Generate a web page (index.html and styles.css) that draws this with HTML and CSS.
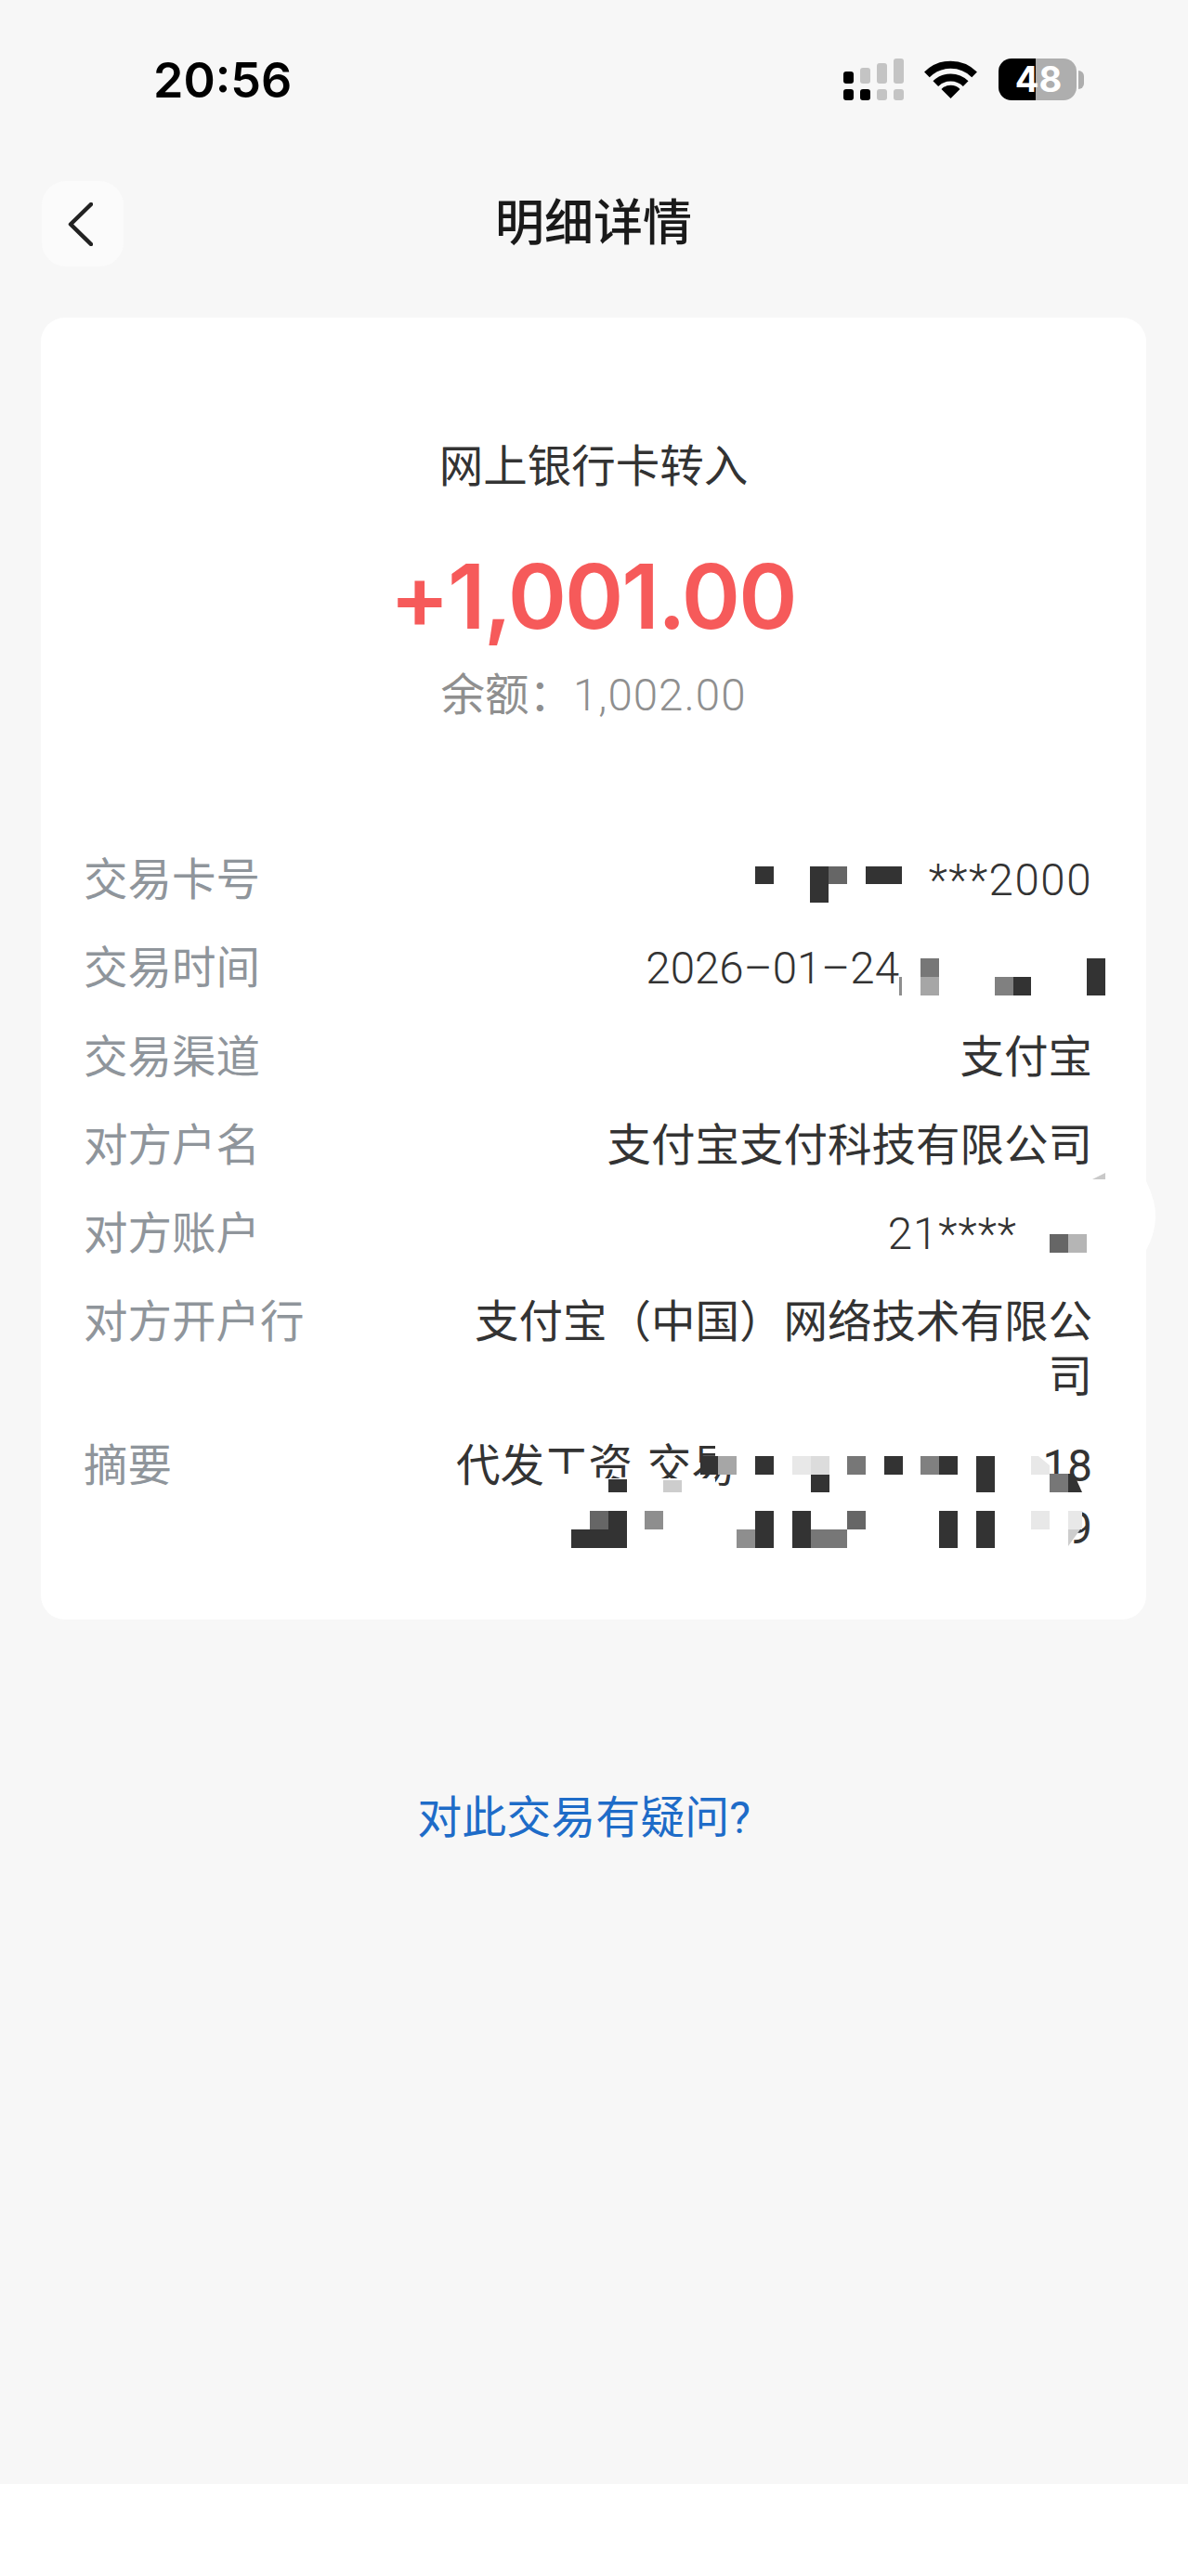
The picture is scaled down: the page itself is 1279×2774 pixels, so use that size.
FILE: index.html
```html
<!DOCTYPE html>
<html lang="zh-CN">
<head>
<meta charset="utf-8">
<title>明细详情</title>
<link rel="stylesheet" href="styles.css">
</head>
<body>
<div class="page">
  <main class="screen">
    <header class="status">
      <div class="time">20:56</div>
      <div class="status-icons">
        <svg class="signal" viewBox="0 0 65 45" aria-hidden="true">
          <rect class="on" x="0" y="14" width="11" height="13" rx="3"/>
          <rect class="off" x="18" y="10" width="11" height="17" rx="3"/>
          <rect class="off" x="36" y="5" width="11" height="22" rx="3"/>
          <rect class="off" x="54" y="0" width="11" height="27" rx="3"/>
          <rect class="on" x="0" y="33" width="11" height="12" rx="3"/>
          <rect class="on" x="18" y="33" width="11" height="12" rx="3"/>
          <rect class="off" x="36" y="33" width="11" height="12" rx="3"/>
          <rect class="off" x="54" y="33" width="11" height="12" rx="3"/>
        </svg>
        <svg class="wifi" viewBox="0 0 57 41" aria-hidden="true">
          <path class="wifi-arc" d="M2.9 15.4A36 36 0 0 1 54.1 15.4"/>
          <path class="wifi-arc" d="M12.3 25.2A23 23 0 0 1 44.7 25.2"/>
          <path class="wifi-dot" d="M28.5 41L18.5 31A14 14 0 0 1 38.5 31Z"/>
        </svg>
        <div class="battery"><span class="battery-level">48</span><span class="battery-nub"></span></div>
      </div>
    </header>

    <nav class="nav">
      <button class="back" type="button" aria-label="返回">
        <svg class="back-icon" viewBox="0 0 27 47" aria-hidden="true"><path d="M25 2L3 23.5L25 45"/></svg>
      </button>
      <h1 class="title">明细详情</h1>
    </nav>

    <section class="card">
      <div class="hero">
        <div class="hero-type">网上银行卡转入</div>
        <div class="hero-amount">+1,001.00</div>
        <div class="hero-balance">余额：<span class="num">1,002.00</span></div>
      </div>
      <dl class="rows">
        <div class="row"><dt class="label">交易卡号</dt><dd class="value num spaced">***2000</dd></div>
        <div class="row"><dt class="label">交易时间</dt><dd class="value num value-date">2026–01–24</dd></div>
        <div class="row"><dt class="label">交易渠道</dt><dd class="value">支付宝</dd></div>
        <div class="row"><dt class="label">对方户名</dt><dd class="value">支付宝支付科技有限公司</dd></div>
        <div class="row"><dt class="label">对方账户</dt><dd class="value num value-account">21****</dd></div>
        <div class="row"><dt class="label">对方开户行</dt><dd class="value">支付宝（中国）网络技术有限公司</dd></div>
        <div class="row"><dt class="label">摘要</dt>
          <dd class="value value-memo">
            <span class="memo-line"><span class="memo-text">代发工资 交易</span><span>18</span></span>
            <span class="memo-end">9</span>
          </dd>
        </div>
      </dl>
    </section>

    <a class="question" href="#">对此交易有疑问?</a>
  </main>

  <svg class="redaction" viewBox="0 0 1279 2774" shape-rendering="crispEdges" aria-hidden="true">
    <g class="mask">
      <path shape-rendering="auto" d="M1234 1272Q1245 1295 1244 1312Q1243 1330 1234 1346Z"/>
      <rect x="584" y="1587" width="56" height="24"/>
      <rect x="640" y="1592" width="130" height="19"/>
      <rect x="770" y="1550" width="30" height="20"/>
    </g>
    <path class="corner" shape-rendering="auto" d="M1176 1270L1190 1263V1270Z"/>
    <g class="d">
      <rect x="813" y="933" width="20" height="19"/><rect x="872" y="933" width="20" height="39"/><rect x="932" y="933" width="39" height="19"/>
      <rect x="1091" y="1052" width="19" height="20"/><rect x="1170" y="1032" width="20" height="40"/>
      <rect x="754" y="1568" width="19" height="20"/><rect x="813" y="1568" width="20" height="20"/><rect x="952" y="1568" width="20" height="20"/><rect x="1011" y="1568" width="20" height="20"/><rect x="1051" y="1568" width="20" height="39"/>
      <rect x="655" y="1593" width="20" height="14"/><rect x="873" y="1587" width="20" height="20"/>
      <rect x="655" y="1627" width="20" height="20"/><rect x="813" y="1627" width="20" height="40"/><rect x="853" y="1627" width="20" height="40"/><rect x="1011" y="1627" width="20" height="40"/><rect x="1051" y="1627" width="20" height="40"/>
      <rect x="615" y="1647" width="60" height="20"/>
      <path shape-rendering="auto" d="M1150 1587H1156L1165 1607H1150Z"/>
    </g>
    <rect class="g66" x="892" y="933" width="20" height="19"/>
    <rect class="g88" x="968" y="1052" width="3" height="20"/>
    <rect class="g77" x="991" y="1032" width="20" height="20"/>
    <rect class="ga" x="991" y="1052" width="20" height="20"/>
    <rect class="g80" x="1071" y="1052" width="20" height="20"/>
    <rect class="g66" x="1130" y="1329" width="20" height="20"/>
    <rect class="gb" x="1150" y="1329" width="20" height="20"/>
    <rect class="ga" x="773" y="1568" width="20" height="20"/>
    <rect class="ge" x="853" y="1568" width="20" height="20"/>
    <rect class="gd" x="873" y="1568" width="20" height="20"/>
    <rect class="g77" x="912" y="1568" width="20" height="20"/>
    <rect class="g80" x="991" y="1568" width="20" height="20"/>
    <path class="ge" shape-rendering="auto" d="M1110 1568H1118L1130 1578V1588H1110Z"/>
    <rect class="gc" x="714" y="1594" width="20" height="13"/>
    <rect class="g77" x="1130" y="1587" width="20" height="20"/>
    <rect class="g66" x="635" y="1627" width="20" height="20"/>
    <rect class="g88" x="694" y="1627" width="20" height="20"/>
    <rect class="g66" x="912" y="1627" width="20" height="20"/>
    <rect class="ge" x="1110" y="1627" width="20" height="20"/>
    <rect class="ge" x="1150" y="1627" width="15" height="20"/>
    <rect class="g88" x="793" y="1647" width="20" height="20"/>
    <rect class="g77" x="873" y="1647" width="39" height="20"/>
    <path class="gc" shape-rendering="auto" d="M1150 1647H1163L1150 1665Z"/>
  </svg>
</div>
</body>
</html>
```

FILE: styles.css
```css
* { box-sizing: border-box; }
html, body { margin: 0; padding: 0; background: #fff; }
body { font-family: Roboto, "Noto Sans CJK SC", sans-serif; }

.page { position: relative; width: 1279px; height: 2774px; overflow: hidden; }
.screen { height: 2675px; background: #f7f7f7; }

.status { display: flex; justify-content: space-between; height: 195px; padding: 60px 112px 0 165px; }
.time { font: 600 52px/54px Inter, sans-serif; color: #000; }
.status-icons { display: flex; align-items: flex-start; padding-top: 3px; }
.signal { width: 65px; height: 45px; display: block; }
.on { fill: #000; }
.off { fill: #c4c4c4; }
.wifi { width: 57px; height: 41px; display: block; margin: 2px 23px 0 22px; }
.wifi-arc { fill: none; stroke: #000; stroke-width: 8; }
.wifi-dot { fill: #000; }
.battery { position: relative; width: 84px; height: 45px; border-radius: 14px; background: linear-gradient(90deg, #000 0 47.6%, #aeaeae 47.6% 100%); display: flex; align-items: center; justify-content: center; margin-right: 8px; }
.battery-level { font: 700 38px/45px Inter, sans-serif; color: #fff; padding-left: 2px; }
.battery-nub { position: absolute; left: 86px; top: 13px; width: 6px; height: 20px; border-radius: 0 6px 6px 0; background: #aeaeae; }

.nav { display: grid; grid-template-columns: 1fr auto 1fr; align-items: center; height: 92px; margin-bottom: 55px; padding-left: 45px; }
.back { width: 88px; height: 92px; padding: 0 0 0 28px; border: 0; border-radius: 26px; background: #fbfbfb; display: flex; align-items: center; justify-self: start; }
.back-icon { width: 27px; height: 47px; display: block; }
.back-icon path { fill: none; stroke: #222; stroke-width: 4.5; stroke-linecap: round; stroke-linejoin: round; }
.title { margin: 0 46px 10px 0; font: 500 53px/60px "Noto Sans CJK SC", sans-serif; color: #1a1a1a; }

.card { margin: 0 45px 0 44px; height: 1402px; padding-top: 132px; border-radius: 26px; background: #fff; }

.hero { display: flex; flex-direction: column; align-items: center; }
.hero-type { font-size: 47.5px; line-height: 59px; font-weight: 400; color: #333; }
.hero-amount { margin-top: 54px; padding-right: 2px; font: 600 96px/110px Inter, "Noto Sans CJK SC", sans-serif; letter-spacing: -2px; color: #f65a5a; }
.hero-balance { margin-top: 23px; font-size: 47.5px; line-height: 59px; font-weight: 400; color: #8f8f8f; }
.hero-balance .num { letter-spacing: 1px; }
.num { font-weight: 300; }

.rows { display: flex; flex-direction: column; gap: 36.3px; margin: 140px 0 0; padding: 0 58px 0 46px; }
.row { display: flex; justify-content: space-between; align-items: flex-start; }
.label { font-size: 47.5px; line-height: 59px; font-weight: 400; color: #8f959b; white-space: nowrap; }
.value { width: 685px; margin: 0; font-size: 47.5px; line-height: 59px; font-weight: 400; color: #333; text-align: right; }
.value.num { font-weight: 300; }
.spaced { letter-spacing: 1.5px; }
.value-date { padding-right: 208px; }
.value-account { padding-right: 81px; letter-spacing: 1px; }
.value-memo { display: flex; flex-direction: column; height: 118px; }
.memo-line { display: flex; justify-content: space-between; }
.memo-text { word-spacing: 4px; }
.memo-end { display: block; margin-top: 8px; }

.question { display: block; margin-top: 184px; padding-right: 22px; font-size: 48px; line-height: 59px; font-weight: 400; color: #1e6cc8; text-align: center; text-decoration: none; }

.redaction { position: absolute; left: 0; top: 0; width: 1279px; height: 2774px; pointer-events: none; }
.mask { fill: #fff; }
.corner { fill: #c9c9c9; }
.d { fill: #333; }
.g66 { fill: #666; }
.g77 { fill: #777; }
.g80 { fill: #808080; }
.g88 { fill: #8e8e8e; }
.ga { fill: #a6a6a6; }
.gb { fill: #b5b5b5; }
.gc { fill: #cdcdcd; }
.gd { fill: #dcdcdc; }
.ge { fill: #e8e8e8; }
```
